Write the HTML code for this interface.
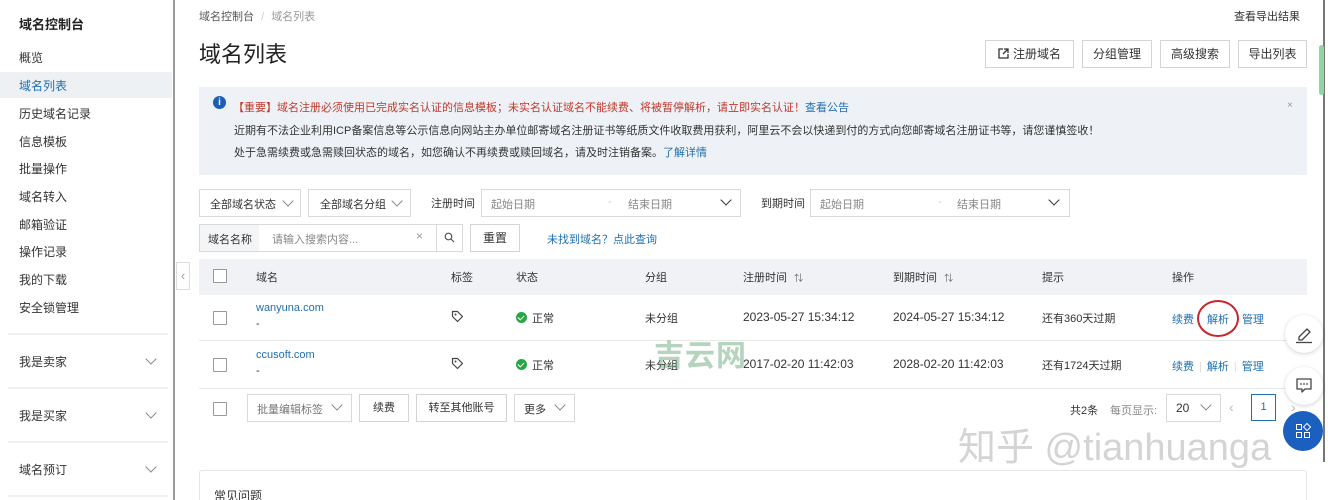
<!DOCTYPE html>
<html><head><meta charset="utf-8"><style>
*{box-sizing:border-box;margin:0;padding:0}
html,body{width:1328px;height:500px;overflow:hidden}
body{background:#fff;font-family:"Liberation Sans","Noto Sans CJK SC",sans-serif;color:#333;font-size:12px;position:relative}
.a{position:absolute;white-space:nowrap}
.nav{left:19px;font-size:12px;color:#333}
.div{position:absolute;left:8px;width:160px;height:2px;background:#eef0f2}
.chev{position:absolute;width:8px;height:8px;border-right:1px solid #888;border-bottom:1px solid #888;transform:rotate(45deg)}
.btn{position:absolute;border:1px solid #d4d4d4;background:#fff;text-align:center;color:#333;font-size:12px}
.box{position:absolute;border:1px solid #d9d9d9;background:#fff}
.cb{position:absolute;width:14px;height:14px;border:1px solid #999;background:#fff;border-radius:1px}
.lnk{color:#1f6fb2}
.ok{display:inline-block;width:11px;height:11px;border-radius:50%;background:#27a644;vertical-align:-1px;margin-right:5px;position:relative}
.ok:after{content:"";position:absolute;left:3px;top:2px;width:3px;height:5px;border-right:1.5px solid #fff;border-bottom:1.5px solid #fff;transform:rotate(45deg)}
.fb{position:absolute;width:38px;height:38px;border-radius:50%;background:#fff;box-shadow:0 1px 4px rgba(0,0,0,.18)}
</style></head><body>
<!-- sidebar -->
<div class="a" style="left:19px;top:14px;font-size:13px;font-weight:bold;color:#222">域名控制台</div>
<div class="a" style="left:0;top:72px;width:172px;height:26px;background:#eef1f4"></div>
<div class="a nav" style="top:49px">概览</div>
<div class="a nav" style="top:77px;color:#1f6fb2">域名列表</div>
<div class="a nav" style="top:105px">历史域名记录</div>
<div class="a nav" style="top:133px">信息模板</div>
<div class="a nav" style="top:160px">批量操作</div>
<div class="a nav" style="top:188px">域名转入</div>
<div class="a nav" style="top:216px">邮箱验证</div>
<div class="a nav" style="top:243px">操作记录</div>
<div class="a nav" style="top:271px">我的下载</div>
<div class="a nav" style="top:299px">安全锁管理</div>
<div class="div" style="top:333px"></div>
<div class="a nav" style="top:353px">我是卖家</div><div class="chev" style="left:147px;top:355px"></div>
<div class="div" style="top:387px"></div>
<div class="a nav" style="top:407px">我是买家</div><div class="chev" style="left:147px;top:409px"></div>
<div class="div" style="top:441px"></div>
<div class="a nav" style="top:461px">域名预订</div><div class="chev" style="left:147px;top:463px"></div>
<div class="div" style="top:495px"></div>
<div class="a" style="left:173px;top:0;width:2px;height:500px;background:#9a9a9a"></div>
<div class="a" style="left:176px;top:262px;width:14px;height:28px;border:1px solid #ddd;background:#fff;color:#999;font-size:13px;text-align:center;line-height:25px">‹</div>
<!-- header -->
<div class="a" style="left:199px;top:8px;font-size:11px;color:#555">域名控制台 <span style="color:#ccc;margin:0 4px">/</span> <span style="color:#999">域名列表</span></div>
<div class="a" style="left:199px;top:37px;font-size:22px;color:#222">域名列表</div>
<div class="a" style="left:1234px;top:8px;font-size:11px;color:#333">查看导出结果</div>
<div class="btn" style="left:985px;top:40px;width:89px;height:28px;line-height:26px"><svg width="11" height="11" viewBox="0 0 11 11" style="vertical-align:-1px;margin-right:4px"><path d="M5 1H1v9h9V6" fill="none" stroke="#333" stroke-width="1.3"/><path d="M6 1h4v4M10 1L5 6" fill="none" stroke="#333" stroke-width="1.3"/></svg>注册域名</div>
<div class="btn" style="left:1082px;top:40px;width:70px;height:28px;line-height:26px">分组管理</div>
<div class="btn" style="left:1160px;top:40px;width:70px;height:28px;line-height:26px">高级搜索</div>
<div class="btn" style="left:1238px;top:40px;width:69px;height:28px;line-height:26px">导出列表</div>
<!-- notice -->
<div class="a" style="left:199px;top:87px;width:1108px;height:88px;background:#eef2f6"></div>
<div class="a" style="left:213px;top:96px;width:13px;height:13px;border-radius:50%;background:#1a5fb4;color:#fff;font-size:10px;font-weight:bold;text-align:center;line-height:13px">i</div>
<div class="a" style="left:233px;top:99px;font-size:11px;color:#c0392b">【重要】域名注册必须使用已完成实名认证的信息模板；未实名认证域名不能续费、将被暂停解析，请立即实名认证！<span class="lnk">查看公告</span></div>
<div class="a" style="left:234px;top:122px;font-size:11px;color:#333">近期有不法企业利用ICP备案信息等公示信息向网站主办单位邮寄域名注册证书等纸质文件收取费用获利，阿里云不会以快递到付的方式向您邮寄域名注册证书等，请您谨慎签收！</div>
<div class="a" style="left:234px;top:144px;font-size:11px;color:#333">处于急需续费或急需赎回状态的域名，如您确认不再续费或赎回域名，请及时注销备案。<span class="lnk">了解详情</span></div>
<div class="a" style="left:1287px;top:100px;font-size:10px;color:#999">×</div>
<!-- filters -->
<div class="box" style="left:199px;top:189px;width:102px;height:28px"></div><div class="a" style="left:210px;top:196px;font-size:11px">全部域名状态</div><div class="chev" style="left:284px;top:197px"></div>
<div class="box" style="left:308px;top:189px;width:103px;height:28px"></div><div class="a" style="left:320px;top:196px;font-size:11px">全部域名分组</div><div class="chev" style="left:393px;top:197px"></div>
<div class="a" style="left:431px;top:195px;font-size:11px">注册时间</div>
<div class="box" style="left:481px;top:189px;width:260px;height:28px"></div><div class="a" style="left:491px;top:196px;font-size:11px;color:#888">起始日期</div><div class="a" style="left:608px;top:196px;font-size:11px;color:#ccc">-</div><div class="a" style="left:628px;top:196px;font-size:11px;color:#888">结束日期</div><div class="chev" style="left:722px;top:196px;border-color:#333"></div>
<div class="a" style="left:761px;top:195px;font-size:11px">到期时间</div>
<div class="box" style="left:810px;top:189px;width:260px;height:28px"></div><div class="a" style="left:820px;top:196px;font-size:11px;color:#888">起始日期</div><div class="a" style="left:938px;top:196px;font-size:11px;color:#ccc">-</div><div class="a" style="left:957px;top:196px;font-size:11px;color:#888">结束日期</div><div class="chev" style="left:1050px;top:196px;border-color:#333"></div>
<div class="box" style="left:199px;top:224px;width:264px;height:28px"></div>
<div class="a" style="left:200px;top:225px;width:59px;height:26px;background:#f4f5f7"></div>
<div class="a" style="left:208px;top:231px;font-size:11px">域名名称</div>
<div class="a" style="left:272px;top:231px;font-size:11px;color:#888">请输入搜索内容...</div>
<div class="a" style="left:416px;top:229px;font-size:12px;color:#999">×</div>
<div class="a" style="left:436px;top:224px;width:1px;height:28px;background:#d9d9d9"></div>
<svg class="a" style="left:444px;top:232px" width="11" height="11" viewBox="0 0 11 11"><circle cx="4.5" cy="4.5" r="3.3" fill="none" stroke="#555" stroke-width="1.2"/><path d="M7 7l3 3" stroke="#555" stroke-width="1.2"/></svg>
<div class="btn" style="left:470px;top:224px;width:50px;height:28px;line-height:26px">重置</div>
<div class="a lnk" style="left:547px;top:231px;font-size:11px">未找到域名？点此查询</div>
<!-- table -->
<div class="a" style="left:199px;top:259px;width:1108px;height:36px;background:#f0f2f5"></div>
<div class="cb" style="left:213px;top:269px"></div>
<div class="a" style="left:256px;top:269px;font-size:11px">域名</div>
<div class="a" style="left:451px;top:269px;font-size:11px">标签</div>
<div class="a" style="left:516px;top:269px;font-size:11px">状态</div>
<div class="a" style="left:645px;top:269px;font-size:11px">分组</div>
<div class="a" style="left:743px;top:269px;font-size:11px">注册时间 <span style="font-size:9px;color:#666;margin-left:4px">⇅</span></div>
<div class="a" style="left:893px;top:269px;font-size:11px">到期时间 <span style="font-size:9px;color:#666;margin-left:4px">⇅</span></div>
<div class="a" style="left:1042px;top:269px;font-size:11px">提示</div>
<div class="a" style="left:1172px;top:269px;font-size:11px">操作</div>
<div class="a" style="left:199px;top:340px;width:1108px;height:1px;background:#e8e8e8"></div>
<div class="a" style="left:199px;top:388px;width:1108px;height:1px;background:#e8e8e8"></div>

<div class="cb" style="left:213px;top:311px"></div>
<div class="a lnk" style="left:256px;top:302px;font-size:11px">wanyuna.com</div>
<div class="a" style="left:256px;top:318px;font-size:11px">-</div>
<svg class="a" style="left:451px;top:310px" width="13" height="13" viewBox="0 0 13 13"><path d="M1.5 1.5h5l5 5-5 5-5-5z" fill="none" stroke="#444" stroke-width="1.2" stroke-linejoin="round"/><circle cx="4.5" cy="4.5" r="1" fill="#444"/></svg>
<div class="a" style="left:516px;top:310px;font-size:11px"><span class="ok"></span>正常</div>
<div class="a" style="left:645px;top:310px;font-size:11px">未分组</div>
<div class="a" style="left:743px;top:310px;font-size:12px">2023-05-27 15:34:12</div>
<div class="a" style="left:893px;top:310px;font-size:12px">2024-05-27 15:34:12</div>
<div class="a" style="left:1042px;top:310px;font-size:11px">还有360天过期</div>
<div class="a lnk" style="left:1172px;top:311px;font-size:11px">续费</div>
<div class="a lnk" style="left:1207px;top:311px;font-size:11px">解析</div>
<div class="a lnk" style="left:1242px;top:311px;font-size:11px">管理</div>
<div class="a" style="left:1197px;top:300px;width:42px;height:37px;border:2px solid #c8262b;border-radius:50%"></div>

<div class="cb" style="left:213px;top:358px"></div>
<div class="a lnk" style="left:256px;top:349px;font-size:11px">ccusoft.com</div>
<div class="a" style="left:256px;top:365px;font-size:11px">-</div>
<svg class="a" style="left:451px;top:357px" width="13" height="13" viewBox="0 0 13 13"><path d="M1.5 1.5h5l5 5-5 5-5-5z" fill="none" stroke="#444" stroke-width="1.2" stroke-linejoin="round"/><circle cx="4.5" cy="4.5" r="1" fill="#444"/></svg>
<div class="a" style="left:516px;top:357px;font-size:11px"><span class="ok"></span>正常</div>
<div class="a" style="left:645px;top:357px;font-size:11px">未分组</div>
<div class="a" style="left:743px;top:357px;font-size:12px">2017-02-20 11:42:03</div>
<div class="a" style="left:893px;top:357px;font-size:12px">2028-02-20 11:42:03</div>
<div class="a" style="left:1042px;top:357px;font-size:11px">还有1724天过期</div>
<div class="a" style="left:1172px;top:358px;font-size:11px"><span class="lnk">续费</span><span style="color:#ddd;margin:0 5px">|</span><span class="lnk">解析</span><span style="color:#ddd;margin:0 5px">|</span><span class="lnk">管理</span></div>
<!-- bottom bar -->
<div class="cb" style="left:213px;top:402px"></div>
<div class="box" style="left:247px;top:394px;width:105px;height:28px"></div><div class="a" style="left:257px;top:401px;font-size:11px;color:#777">批量编辑标签</div><div class="chev" style="left:333px;top:401px"></div>
<div class="btn" style="left:359px;top:394px;width:50px;height:28px;line-height:26px;font-size:11px">续费</div>
<div class="btn" style="left:416px;top:394px;width:91px;height:28px;line-height:26px;font-size:11px">转至其他账号</div>
<div class="box" style="left:514px;top:394px;width:61px;height:28px"></div><div class="a" style="left:524px;top:401px;font-size:11px">更多</div><div class="chev" style="left:556px;top:401px"></div>
<div class="a" style="left:1070px;top:402px;font-size:11px">共2条</div>
<div class="a" style="left:1110px;top:402px;font-size:11px;color:#888">每页显示:</div>
<div class="box" style="left:1166px;top:394px;width:55px;height:28px"></div><div class="a" style="left:1176px;top:401px;font-size:12px">20</div><div class="chev" style="left:1202px;top:401px"></div>
<div class="a" style="left:1229px;top:399px;font-size:14px;color:#bbb">‹</div>
<div class="a" style="left:1251px;top:394px;width:25px;height:27px;border:1px solid #1f6fb2;text-align:center;line-height:25px;font-size:11px;color:#1f6fb2">1</div>
<div class="a" style="left:1291px;top:399px;font-size:14px;color:#bbb">›</div>
<!-- faq card -->
<div class="a" style="left:199px;top:470px;width:1108px;height:40px;border:1px solid #e5e5e5;border-radius:3px"></div>
<div class="a" style="left:214px;top:487px;font-size:12px">常见问题</div>
<!-- watermarks -->
<div class="a" style="left:654px;top:331px;font-size:30px;color:rgba(90,160,110,.45);font-weight:bold;letter-spacing:1px">吉云网</div>
<div class="a" style="left:958px;top:416px;font-size:38px;color:rgba(160,160,160,.45)">知乎 @tianhuanga</div>
<!-- right side -->
<div class="a" style="left:1323px;top:0;width:2px;height:462px;background:#777"></div>
<div class="a" style="left:1319px;top:45px;width:5px;height:50px;border-radius:3px;background:#8fd6a0"></div>
<div class="fb" style="left:1285px;top:315px"></div>
<svg class="a" style="left:1295px;top:324px" width="18" height="20" viewBox="0 0 18 20"><path d="M4 13l8-8 3 3-8 8H4z" fill="none" stroke="#444" stroke-width="1.3" stroke-linejoin="round"/><path d="M1 18.5h16" stroke="#444" stroke-width="1.3"/></svg>
<div class="fb" style="left:1285px;top:367px"></div>
<svg class="a" style="left:1295px;top:377px" width="18" height="18" viewBox="0 0 18 18"><path d="M2 2h14v10H10l-3 3v-3H2z" fill="none" stroke="#444" stroke-width="1.3" stroke-linejoin="round"/><circle cx="6" cy="7" r=".9" fill="#444"/><circle cx="9" cy="7" r=".9" fill="#444"/><circle cx="12" cy="7" r=".9" fill="#444"/></svg>
<div class="a" style="left:1283px;top:411px;width:40px;height:40px;border-radius:50%;background:#1b5fbf"></div>
<div class="a" style="left:1296px;top:424px;width:6px;height:6px;border:1.3px solid #fff"></div>
<div class="a" style="left:1304px;top:424px;width:6px;height:6px;border:1.3px solid #fff;transform:rotate(45deg)"></div>
<div class="a" style="left:1296px;top:432px;width:6px;height:6px;border:1.3px solid #fff"></div>
<div class="a" style="left:1304px;top:432px;width:6px;height:6px;border:1.3px solid #fff"></div>
</body></html>
